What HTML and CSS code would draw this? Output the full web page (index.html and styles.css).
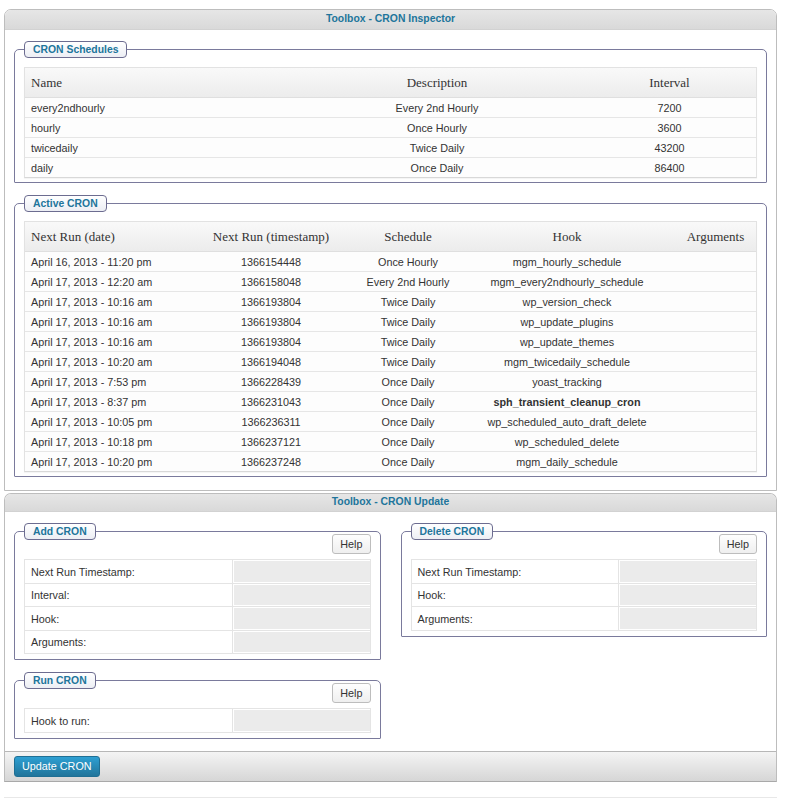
FILE: index.html
```html
<!DOCTYPE html>
<html>
<head>
<meta charset="utf-8">
<title>Toolbox - CRON</title>
<link rel="stylesheet" href="styles.css">
</head>
<body>
<div class="page">
  <div class="panel">
    <div class="panel-head">Toolbox - CRON Inspector</div>
    <div class="panel-body">
      <fieldset class="box">
        <legend>CRON Schedules</legend>
        <table class="grid">
          <colgroup><col class="s1"><col class="s2"><col class="s3"></colgroup>
          <thead><tr><th class="left">Name</th><th>Description</th><th>Interval</th></tr></thead>
          <tbody>
            <tr><td class="left">every2ndhourly</td><td>Every 2nd Hourly</td><td>7200</td></tr>
            <tr><td class="left">hourly</td><td>Once Hourly</td><td>3600</td></tr>
            <tr><td class="left">twicedaily</td><td>Twice Daily</td><td>43200</td></tr>
            <tr><td class="left">daily</td><td>Once Daily</td><td>86400</td></tr>
          </tbody>
        </table>
      </fieldset>
      <fieldset class="box next">
        <legend>Active CRON</legend>
        <table class="grid">
          <colgroup><col class="a1"><col class="a2"><col class="a3"><col class="a4"><col class="a5"></colgroup>
          <thead><tr><th class="left">Next Run (date)</th><th>Next Run (timestamp)</th><th>Schedule</th><th>Hook</th><th>Arguments</th></tr></thead>
          <tbody>
            <tr><td class="left">April 16, 2013 - 11:20 pm</td><td>1366154448</td><td>Once Hourly</td><td>mgm_hourly_schedule</td><td></td></tr>
            <tr><td class="left">April 17, 2013 - 12:20 am</td><td>1366158048</td><td>Every 2nd Hourly</td><td>mgm_every2ndhourly_schedule</td><td></td></tr>
            <tr><td class="left">April 17, 2013 - 10:16 am</td><td>1366193804</td><td>Twice Daily</td><td>wp_version_check</td><td></td></tr>
            <tr><td class="left">April 17, 2013 - 10:16 am</td><td>1366193804</td><td>Twice Daily</td><td>wp_update_plugins</td><td></td></tr>
            <tr><td class="left">April 17, 2013 - 10:16 am</td><td>1366193804</td><td>Twice Daily</td><td>wp_update_themes</td><td></td></tr>
            <tr><td class="left">April 17, 2013 - 10:20 am</td><td>1366194048</td><td>Twice Daily</td><td>mgm_twicedaily_schedule</td><td></td></tr>
            <tr><td class="left">April 17, 2013 - 7:53 pm</td><td>1366228439</td><td>Once Daily</td><td>yoast_tracking</td><td></td></tr>
            <tr><td class="left">April 17, 2013 - 8:37 pm</td><td>1366231043</td><td>Once Daily</td><td class="strong">sph_transient_cleanup_cron</td><td></td></tr>
            <tr><td class="left">April 17, 2013 - 10:05 pm</td><td>1366236311</td><td>Once Daily</td><td>wp_scheduled_auto_draft_delete</td><td></td></tr>
            <tr><td class="left">April 17, 2013 - 10:18 pm</td><td>1366237121</td><td>Once Daily</td><td>wp_scheduled_delete</td><td></td></tr>
            <tr><td class="left">April 17, 2013 - 10:20 pm</td><td>1366237248</td><td>Once Daily</td><td>mgm_daily_schedule</td><td></td></tr>
          </tbody>
        </table>
      </fieldset>
    </div>
  </div>

  <div class="panel second">
    <div class="panel-head">Toolbox - CRON Update</div>
    <div class="panel-body cols">
      <div class="col">
        <fieldset class="box form-box">
          <legend>Add CRON</legend>
          <div class="help-row"><button class="help" type="button">Help</button></div>
          <table class="form">
            <tr><td class="label">Next Run Timestamp:</td><td class="field"><input type="text"></td></tr>
            <tr><td class="label">Interval:</td><td class="field"><input type="text"></td></tr>
            <tr><td class="label">Hook:</td><td class="field"><input type="text"></td></tr>
            <tr><td class="label">Arguments:</td><td class="field"><input type="text"></td></tr>
          </table>
        </fieldset>
        <fieldset class="box form-box next">
          <legend>Run CRON</legend>
          <div class="help-row"><button class="help" type="button">Help</button></div>
          <table class="form">
            <tr><td class="label">Hook to run:</td><td class="field"><input type="text"></td></tr>
          </table>
        </fieldset>
      </div>
      <div class="col">
        <fieldset class="box form-box">
          <legend>Delete CRON</legend>
          <div class="help-row"><button class="help" type="button">Help</button></div>
          <table class="form">
            <tr><td class="label">Next Run Timestamp:</td><td class="field"><input type="text"></td></tr>
            <tr><td class="label">Hook:</td><td class="field"><input type="text"></td></tr>
            <tr><td class="label">Arguments:</td><td class="field"><input type="text"></td></tr>
          </table>
        </fieldset>
      </div>
    </div>
    <div class="panel-foot"><button class="primary" type="button">Update CRON</button></div>
  </div>
  <div class="rule"></div>
</div>
</body>
</html>
```

FILE: styles.css
```css
html, body {
  margin: 0;
  background: #fff;
}
body {
  font-family: "Liberation Sans", Arial, sans-serif;
  font-size: 10.8px;
  color: #333;
}
.page {
  padding: 9px 9px 0 4px;
}
.panel {
  border: 1px solid #bdbdbd;
  border-radius: 7px 7px 0 0;
  background: #fff;
}
.panel.second {
  margin-top: 2px;
  border-bottom-color: #a9a9a9;
}
.panel-head {
  height: 19px;
  line-height: 18px;
  text-align: center;
  font-weight: bold;
  font-size: 10.4px;
  color: #21759b;
  background: linear-gradient(#e6e6e6, #d9d9d9);
  border-bottom: 1px solid #d2d2d2;
  border-radius: 6px 6px 0 0;
}
.second .panel-head {
  height: 17px;
  line-height: 16px;
}
.panel-body {
  padding: 11px 9px 13px;
}
.box {
  margin: 0;
  min-width: 0;
  border: 1px solid #7a7a9c;
  border-radius: 5px 5px 1px 1px;
  padding: 9px 9px 4px;
}
.box.next {
  margin-top: 12px;
}
.box legend {
  padding: 0 8px;
  height: 15px;
  line-height: 15px;
  border: 1px solid #6c6c90;
  border-radius: 4px;
  background: linear-gradient(#ffffff, #eceef4);
  color: #21759b;
  font-weight: bold;
  font-size: 10.4px;
}
.grid {
  width: 100%;
  table-layout: fixed;
  border-collapse: separate;
  border-spacing: 0;
  border: 1px solid #e2e2e2;
  border-bottom-color: #d8d8d8;
  box-shadow: 0 1px 1px rgba(0,0,0,0.04);
}
.grid .s1 { width: 266px; }
.grid .s2 { width: 292px; }
.grid .s3 { width: 173px; }
.grid .a1 { width: 160px; }
.grid .a2 { width: 172px; }
.grid .a3 { width: 102px; }
.grid .a4 { width: 216px; }
.grid .a5 { width: 81px; }
.grid th {
  font-family: "Liberation Serif", Georgia, serif;
  font-size: 13px;
  font-weight: normal;
  color: #333;
  line-height: 29px;
  padding: 0 6px;
  text-align: center;
  white-space: nowrap;
  background: linear-gradient(#f9f9f9, #ececec);
  border-bottom: 1px solid #dfdfdf;
}
.grid td {
  line-height: 18px;
  padding: 1px 6px 0;
  text-align: center;
  white-space: nowrap;
  background: #fdfdfd;
  border-bottom: 1px solid #e6e6e6;
}
.grid tbody tr:last-child td {
  border-bottom: 0;
}
.grid .left {
  text-align: left;
}
.grid td.strong {
  font-weight: bold;
}
.cols {
  display: grid;
  grid-template-columns: 1fr 1fr;
  column-gap: 20px;
  align-items: start;
  padding: 11px 9px 12px;
}
.form-box {
  padding: 0 9px 5px;
}
.help-row {
  display: flex;
  justify-content: flex-end;
  margin-top: -6px;
  margin-bottom: 5px;
}
.help {
  height: 20px;
  padding: 0 7px;
  font-family: "Liberation Sans", Arial, sans-serif;
  font-size: 10.8px;
  color: #333;
  border: 1px solid #bdbdbd;
  border-radius: 3px;
  background: linear-gradient(#fefefe, #efefef);
}
.form {
  width: 100%;
  border-collapse: separate;
  border-spacing: 0;
  border: 1px solid #e4e4e4;
}
.form td {
  border-bottom: 1px solid #e4e4e4;
  background: #fff;
}
.form tr:last-child td {
  border-bottom: 0;
}
.form .label {
  width: 60%;
  padding: 2px 6px 0;
  line-height: 19px;
  white-space: nowrap;
}
.form .field {
  padding: 1px 0 1px 1px;
  border-left: 1px solid #e4e4e4;
}
.form input {
  display: block;
  width: 100%;
  height: 20.5px;
  box-sizing: border-box;
  margin: 0;
  border: 0;
  background: #ebebeb;
}
.panel-foot {
  border-top: 1px solid #b7b7b7;
  background: linear-gradient(#f4f4f4, #d6d6d6);
  padding: 4px 9px;
}
.primary {
  display: block;
  height: 21px;
  padding: 0 7px;
  font-family: "Liberation Sans", Arial, sans-serif;
  font-size: 10.8px;
  color: #fff;
  border: 1px solid #1f6f94;
  border-radius: 3px;
  background: linear-gradient(#2e9fd2, #21759b);
}
.rule {
  margin-top: 15px;
  height: 1px;
  background: #e8e8e8;
}
```
